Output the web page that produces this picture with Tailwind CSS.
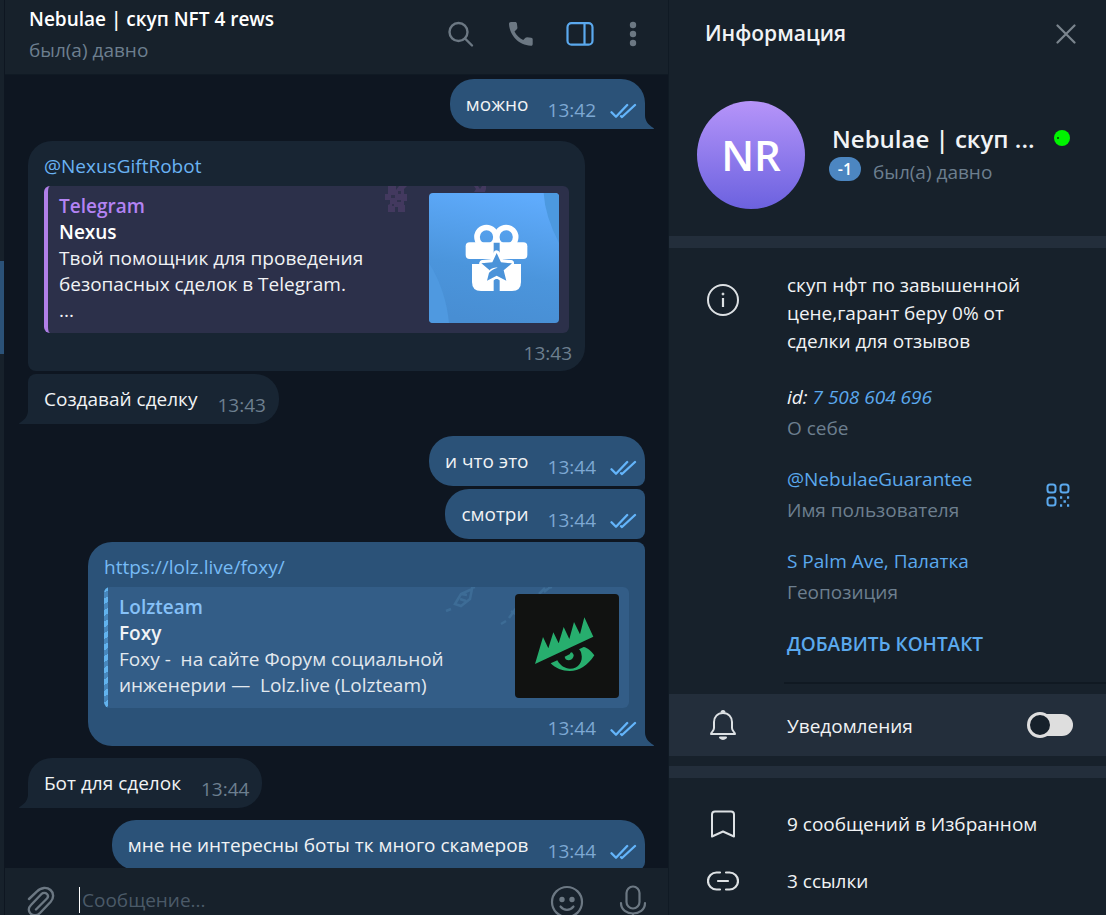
<!DOCTYPE html>
<html lang="ru">
<head>
  <meta charset="UTF-8" />
  <meta name="viewport" content="width=device-width, initial-scale=1.0" />
  <title>Nebulae | скуп NFT 4 rews</title>
  <script src="https://cdn.jsdelivr.net/npm/@tailwindcss/browser@4"></script>
  <style>
    body {
      font-family: 'Open Sans', 'Noto Sans', sans-serif;
    }
  </style>
</head>
<body class="bg-[#0e1621] text-[19px] leading-[26px] text-[#f1f3f5]">

  <!-- Shared icons -->
  <svg class="hidden" aria-hidden="true">
    <symbol id="ticks" viewBox="0 0 27 16">
      <path d="M1.5 9.2 6 13.8 17.2 2M11 13.2l1 .8L25 2" fill="none" stroke="#64b5fb" stroke-width="2.3" stroke-linecap="round" stroke-linejoin="round" />
    </symbol>
    <symbol id="tail" viewBox="0 0 9 14">
      <path d="M0 0C0 6 3 9.500 8.500 13Q9.500 14 8 14H0Z" fill="currentColor" />
    </symbol>
  </svg>

  <div class="flex h-screen overflow-hidden">

    <!-- Edge of the chat list -->
    <div class="w-1 shrink-0 bg-[#17212b] pt-[261px]">
      <div class="h-[93px] bg-[#2b5278]"></div>
    </div>

    <!-- Chat -->
    <main class="flex min-w-0 flex-1 flex-col border-l border-[#0e1621]">
      <header class="flex h-[75px] shrink-0 justify-between border-b border-[#101a24] bg-[#17212b] pr-[23px] pl-6">
        <div class="min-w-0 pt-[6px]">
          <h1 class="truncate font-semibold text-white">Nebulae | скуп NFT 4 rews</h1>
          <p class="mt-[5px] text-[#6d7f8f]">был(а) давно</p>
        </div>
        <div class="flex items-start gap-[30px] pt-[19px] text-[#6c7883]">
          <button type="button" aria-label="Поиск">
            <svg class="size-[30px]" viewBox="0 0 30 30" fill="none" stroke="currentColor" stroke-width="2.4" stroke-linecap="round"><circle cx="13.500" cy="13" r="9" /><path d="m20 19.500 7 7" /></svg>
          </button>
          <button type="button" aria-label="Позвонить">
            <svg class="size-[30px]" viewBox="0 0 30 30" fill="currentColor"><path d="M6 3h4.200c.9 0 1.600.6 1.700 1.500l.5 4.100c.1.6-.1 1.200-.6 1.600L9.500 12.400c1.900 3.700 5 6.800 8.700 8.700l2.300-2.300c.4-.4 1-.6 1.600-.6l4.100.5c.9.1 1.500.8 1.500 1.700v4.500c0 1.200-.9 2-2 1.900C14 26 4.700 16.700 4 5c-.1-1.100.8-2 2-2z" /></svg>
          </button>
          <button type="button" aria-label="Информация о чате" class="text-[#5ba9ee]">
            <svg class="size-[30px]" viewBox="0 0 30 30" fill="none" stroke="currentColor" stroke-width="2.2"><rect x="2.500" y="4.200" width="25" height="21.500" rx="4" /><path d="M19.500 4v22" /></svg>
          </button>
          <button type="button" aria-label="Меню">
            <svg class="h-[30px] w-5" viewBox="0 0 20 30" fill="currentColor"><circle cx="8" cy="6" r="3.200" /><circle cx="8" cy="15" r="3.200" /><circle cx="8" cy="24" r="3.200" /></svg>
          </button>
        </div>
      </header>

      <section class="flex min-h-0 flex-1 flex-col overflow-hidden pt-1 pr-[23px] pl-[23px]" aria-label="Сообщения">
        <div class="relative flex h-[50px] shrink-0 self-end rounded-[24px] rounded-br-none bg-[#2b5278] pt-3 pr-2 pl-4">
          <p>можно</p>
          <time class="mt-[6px] ml-[19px] text-[#7da8d3]">13:42</time>
          <svg class="mt-3 ml-[14px] h-4 w-[27px]"><use href="#ticks" /></svg>
          <svg class="absolute bottom-0 left-full h-[14px] w-[9px] text-[#2b5278]"><use href="#tail" /></svg>
        </div>

        <article class="mt-3 w-[557px] max-w-full shrink-0 rounded-[24px] rounded-bl-lg bg-[#182533] px-4 pt-3 pb-[5px]">
          <a href="#" class="text-[#6ab3f3]">@NexusGiftRobot</a>
          <div class="relative mt-[7px] flex justify-between overflow-hidden rounded-md border-l-4 border-[#b07fe8] bg-[#2c304a] pt-[7px] pr-[10px] pb-[10px] pl-[11px]">
            <svg class="absolute top-0 right-[72px] h-7 w-[120px] text-[#43395f]" viewBox="0 0 120 28" fill="currentColor">
              <path d="M11 0h8v4l3-4h8l-3 3v5h3v7h-3v4h1v7h-7v-5h-3v5h-7v-7l2-1v-4h-5V8h3z" />
              <path d="M97 0h4l2 3 2-3h4v3l-1 3H97l2-3z" />
              <path d="M14 9h4v3h-4zM21 5h3v3h-3zM20 14h4v2h-4zM15 18h2v2h-2z" fill="#30304c" />
            </svg>
            <div class="max-w-[340px]">
              <p class="font-semibold text-[#b383f3]">Telegram</p>
              <p class="font-semibold text-white">Nexus</p>
              <p>Твой помощник для проведения безопасных сделок в Telegram.</p>
              <p>...</p>
            </div>
            <svg class="relative size-[130px] shrink-0 rounded-sm" viewBox="0 0 390 390" role="img" aria-label="Nexus">
              <defs>
                <linearGradient id="sky" x1="0.600" y1="0" x2="0.400" y2="1"><stop offset="0" stop-color="#5fabfc" /><stop offset="0.600" stop-color="#4b95dc" /><stop offset="1" stop-color="#488ed3" /></linearGradient>
              </defs>
              <rect width="390" height="390" fill="url(#sky)" />
              <path d="M344 0q4 70 46 150V0z" fill="#4c99e0" />
              <path d="M0 210q50 80 60 180H0z" fill="#4f99e0" />
              <g fill="none" stroke="#fff" stroke-width="17">
                <circle cx="172.500" cy="132" r="28.500" />
                <circle cx="231.500" cy="132" r="28.500" />
                <path d="M202 128v24" />
              </g>
              <rect x="110" y="148" width="185" height="50" rx="12" fill="#fff" />
              <path d="M129 213h147v54q0 27-27 27h-93q-27 0-27-27z" fill="#fff" />
              <path d="M194 149h18v40h-18zM194 258h18v36h-18z" fill="#4b93d9" />
              <path d="m203 182 12 26 30 3-22 20 7 30-27-16-27 16 7-30-22-20 30-3z" fill="#4b93d9" stroke="#fff" stroke-width="20" stroke-linejoin="round" />
              <path d="m203 180 13 28 33 3-25 21 8 31-29-15-29 15 8-31-25-21 33-3z" fill="#4b93d9" />
              <path d="M174 242c8-14 18-20 32-18-10 2-18 7-24 14z" fill="#fff" />
            </svg>
          </div>
          <div class="mt-[7px] -mr-[3px] flex justify-end text-[#6d7f8f]"><time>13:43</time></div>
        </article>

        <div class="relative mt-[3px] flex h-[50px] shrink-0 self-start rounded-[24px] rounded-tl-lg rounded-bl-none bg-[#182533] pt-3 pr-[13px] pl-4">
          <p>Создавай сделку</p>
          <time class="mt-[6px] ml-5 text-[#6d7f8f]">13:43</time>
          <svg class="absolute right-full bottom-0 h-[14px] w-[9px] -scale-x-100 text-[#182533]"><use href="#tail" /></svg>
        </div>

        <div class="mt-3 flex h-[50px] shrink-0 self-end rounded-[24px] rounded-br-lg bg-[#2b5278] pt-3 pr-2 pl-4">
          <p>и что это</p>
          <time class="mt-[6px] ml-[19px] text-[#7da8d3]">13:44</time>
          <svg class="mt-3 ml-[14px] h-4 w-[27px]"><use href="#ticks" /></svg>
        </div>

        <div class="mt-[3px] flex h-[50px] shrink-0 self-end rounded-[24px] rounded-r-lg bg-[#2b5278] pt-3 pr-2 pl-4">
          <p>смотри</p>
          <time class="mt-[6px] ml-[19px] text-[#7da8d3]">13:44</time>
          <svg class="mt-3 ml-[14px] h-4 w-[27px]"><use href="#ticks" /></svg>
        </div>

        <article class="relative mt-[3px] w-[557px] max-w-full shrink-0 self-end rounded-[24px] rounded-tr-lg rounded-br-none bg-[#2b5278] px-4 pt-3 pb-[5px]">
          <a href="#" class="text-[#77bbf5]">https://lolz.live/foxy/</a>
          <div class="relative mt-[7px] flex justify-between overflow-hidden rounded-md bg-[#335d87] pt-[7px] pr-[10px] pb-[10px] pl-[15px]">
            <div class="absolute inset-y-0 left-0 w-1 bg-[repeating-linear-gradient(150deg,#62b3ee_0px,#62b3ee_5px,#4787bd_5px,#4787bd_10px)]"></div>
            <svg class="absolute top-0 right-[72px] h-10 w-[116px]" viewBox="0 0 116 40" fill="none" stroke="#3d6c96" stroke-width="2.500">
              <path d="M5 24l5-2M14 17l6-10 11-5-2 10-9 7zM19 12l6 2M20 7l6 1M30 1l4-1M60 37l5-3M68 31l8-11M70 24l6 4M98 7l6-6M103 5l6-5M107 1l4-1" />
            </svg>
            <div class="max-w-[340px]">
              <p class="font-semibold text-[#86c1f8]">Lolzteam</p>
              <p class="font-semibold">Foxy</p>
              <p class="text-[#e2e8ee]">Foxy -&nbsp; на сайте Форум социальной инженерии —&nbsp; Lolz.live (Lolzteam)</p>
            </div>
            <svg class="relative size-[104px] shrink-0 rounded-sm" viewBox="0 0 312 312" role="img" aria-label="Foxy">
              <rect width="312" height="312" fill="#111211" />
              <path d="m60 210 24-81 16 34 15-48 16 33 15-49 17 36 14-51 18 37 13-51 27 58z" fill="#27ae6e" />
              <path d="M107 208l20-9c9 16 23 25 38 25 26 0 40-23 34-45-1-6-3-9-7-13l14-7c11 2 23 12 32 25-20 31-46 47-74 47-22 0-43-8-57-23z" fill="#27ae6e" />
              <path d="M149 188l16-8 1-4 5-1q7 7 4 14c-6 14-25 12-26-1z" fill="#27ae6e" />
            </svg>
          </div>
          <div class="mt-[7px] -mr-2 flex justify-end text-[#7da8d3]">
            <time>13:44</time>
            <svg class="mt-[6px] ml-[14px] h-4 w-[27px]"><use href="#ticks" /></svg>
          </div>
          <svg class="absolute bottom-0 left-full h-[14px] w-[9px] text-[#2b5278]"><use href="#tail" /></svg>
        </article>

        <div class="relative mt-3 flex h-[50px] shrink-0 self-start rounded-[24px] rounded-bl-none bg-[#182533] pt-3 pr-[13px] pl-4">
          <p>Бот для сделок</p>
          <time class="mt-[6px] ml-5 text-[#6d7f8f]">13:44</time>
          <svg class="absolute right-full bottom-0 h-[14px] w-[9px] -scale-x-100 text-[#182533]"><use href="#tail" /></svg>
        </div>

        <div class="mt-3 flex h-[50px] shrink-0 self-end rounded-[24px] rounded-br-lg bg-[#2b5278] pt-3 pr-2 pl-4">
          <p>мне не интересны боты тк много скамеров</p>
          <time class="mt-[6px] ml-[19px] text-[#7da8d3]">13:44</time>
          <svg class="mt-3 ml-[14px] h-4 w-[27px]"><use href="#ticks" /></svg>
        </div>
      </section>

      <!-- Composer -->
      <form class="h-[47px] shrink-0 overflow-hidden bg-[#17212b]">
        <div class="flex items-start pt-4 pr-[21px] pl-5 text-[#6c7883]">
          <button type="button" aria-label="Прикрепить файл">
            <svg class="h-9 w-8" viewBox="0 0 32 36" fill="none" stroke="currentColor" stroke-width="2.400" stroke-linecap="round"><path d="M4 15 12 7.500c4-4.500 10-4.500 13.500-1.500s3.500 8 0 12L15 29c-3 3-7 3-9.500.5s-2-6 .5-8.500L16.500 10c1.500-1.500 4-1.500 5.500 0s1 3.500-.5 5L11 25.500" /></svg>
          </button>
          <input type="text" aria-label="Сообщение" placeholder="Сообщение..." class="mt-[3px] ml-[22px] h-[26px] min-w-0 flex-1 border-l border-white pl-[2px] text-[19px] text-white outline-none placeholder:text-[#4b5a68]" />
          <button type="button" aria-label="Эмодзи">
            <svg class="size-9" viewBox="0 0 36 36" fill="none" stroke="currentColor" stroke-width="2.200" stroke-linecap="round"><circle cx="18" cy="18" r="15" /><path d="M11.500 22.500c3.500 4.500 9.500 4.500 13 0" /><circle cx="13" cy="15.500" r="1.600" fill="currentColor" /><circle cx="23" cy="15.500" r="1.600" fill="currentColor" /></svg>
          </button>
          <button type="button" aria-label="Голосовое сообщение" class="ml-8">
            <svg class="h-9 w-[30px]" viewBox="0 0 30 36" fill="none" stroke="currentColor" stroke-width="2.200" stroke-linecap="round"><rect x="9.500" y="2.500" width="13" height="22" rx="6.500" /><path d="M4 19c0 14 24 14 24 0M16 30v5" /></svg>
          </button>
        </div>
      </form>
    </main>

    <!-- Profile -->
    <aside class="flex w-[438px] shrink-0 flex-col overflow-hidden border-l border-[#101a24] bg-[#17212b]">
      <header class="flex shrink-0 items-start justify-between pt-5 pr-[30px] pl-9">
        <h2 class="text-[21px] font-semibold">Информация</h2>
        <button type="button" aria-label="Закрыть" class="mt-1 text-[#7b858e]">
          <svg class="size-5" viewBox="0 0 20 20" fill="none" stroke="currentColor" stroke-width="2.200" stroke-linecap="round"><path d="m1.500 1.500 17 17m0-17-17 17" /></svg>
        </button>
      </header>

      <div class="mt-[55px] flex shrink-0 pr-[34px] pb-[27px] pl-7">
        <div class="flex size-[108px] shrink-0 items-center justify-center rounded-full bg-linear-to-b from-[#b694f9] to-[#6c61df] text-[42px] font-semibold text-white">NR</div>
        <div class="ml-6 min-w-0 flex-1 pt-[22px]">
          <div class="flex items-center justify-between pl-[3px]">
            <p class="text-2xl font-semibold">Nebulae | скуп ...</p>
            <svg class="size-5 shrink-0" viewBox="0 0 20 20"><circle cx="10" cy="9" r="8" fill="#00f400" /><circle cx="6" cy="9" r="1" fill="#063d06" /></svg>
          </div>
          <div class="flex pt-[2px]">
            <span class="flex h-6 w-8 items-center justify-center rounded-full bg-[#4c86c1] text-base font-semibold text-white">-1</span>
            <p class="mt-[2px] ml-3 text-[#6d7f8f]">был(а) давно</p>
          </div>
        </div>
      </div>

      <div class="h-3 shrink-0 bg-[#232e3b]"></div>

      <div class="flex shrink-0 pt-[23px] pr-9 pl-[38px]">
        <svg class="mt-[13px] size-8 shrink-0" viewBox="0 0 32 32" fill="none" stroke="#dde1e4" stroke-width="2"><circle cx="16" cy="16" r="15" /><path d="M16 14v9" stroke-width="2.200" /><circle cx="16" cy="10" r="1" fill="#dde1e4" stroke-width="1" /></svg>
        <div class="ml-12 min-w-0 flex-1">
          <p class="max-w-[250px] leading-7">скуп нфт по завышенной цене,гарант беру 0% от сделки для отзывов</p>
          <p class="mt-7 leading-7 italic">id: <a href="#" class="text-[#5ba9ee]">7 508 604 696</a></p>
          <p class="mt-1 text-[#6d7f8f]">О себе</p>
          <div class="mt-[25px] flex items-center justify-between">
            <div>
              <p><a href="#" class="text-[#5ba9ee]">@NebulaeGuarantee</a></p>
              <p class="mt-[5px] text-[#6d7f8f]">Имя пользователя</p>
            </div>
            <button type="button" aria-label="QR-код" class="text-[#5ba9ee]">
              <svg class="size-6" viewBox="0 0 24 24" fill="none" stroke="currentColor" stroke-width="2"><rect x="1.500" y="1.500" width="8" height="8" rx="2.500" /><rect x="14.500" y="1.500" width="8" height="8" rx="2.500" /><rect x="1.500" y="14.500" width="8" height="8" rx="2.500" /><path d="M14 14.500h2.200M21 14.500h2.200M17.500 18.500h2.400M14 22.500h2.200M21 22.500h2.200" stroke-width="2.400" /></svg>
            </button>
          </div>
          <p class="mt-[25px]"><a href="#" class="text-[#5ba9ee]">S Palm Ave, Палатка</a></p>
          <p class="mt-[5px] text-[#6d7f8f]">Геопозиция</p>
          <button type="button" class="mt-[26px] block font-semibold text-[#5ba9ee]">ДОБАВИТЬ КОНТАКТ</button>
        </div>
      </div>
      <div class="mt-[25px] ml-[115px] h-[2px] shrink-0 bg-[#101922]"></div>

      <label class="mt-[10px] flex h-[62px] shrink-0 items-center bg-[#232e3b] pr-[33px] pl-[38px]">
        <svg class="size-8 shrink-0" viewBox="0 0 32 32" fill="none" stroke="#dde1e4" stroke-width="2" stroke-linejoin="round"><path d="M4 25c0-2 3-2.500 3-6v-6c0-5 3.500-9 9-9s9 4 9 9v6c0 3.500 3 4 3 6z" /><path d="M14.500 3.500a1.500 1.500 0 0 1 3 0M13 28.500h6q-3 3-6 0z" fill="#dde1e4" /></svg>
        <span class="mt-[2px] ml-12 flex-1">Уведомления</span>
        <input type="checkbox" class="relative h-[22px] w-11 appearance-none rounded-full bg-[#dedede] before:absolute before:-top-[2px] before:-left-[2px] before:size-[26px] before:rounded-full before:border-[3px] before:border-[#dedede] before:bg-[#17212b]" />
      </label>
      <div class="mt-[10px] h-3 shrink-0 bg-[#232e3b]"></div>

      <a href="#" class="mt-[30px] flex shrink-0 items-center pl-[38px]">
        <svg class="h-8 w-8 shrink-0" viewBox="0 0 32 32" fill="none" stroke="#dde1e4" stroke-width="2" stroke-linejoin="round"><path d="M5 28.500V6.500q0-3 3-3h16q3 0 3 3v22l-11-5z" /></svg>
        <span class="ml-12">9 сообщений в Избранном</span>
      </a>
      <a href="#" class="mt-[25px] flex shrink-0 items-center pl-[38px]">
        <svg class="h-8 w-8 shrink-0" viewBox="0 0 32 32" fill="none" stroke="#dde1e4" stroke-width="2.200" stroke-linecap="round"><path d="M13 7.500H9.500a8.500 8.500 0 0 0 0 17H13M19 7.500h3.500a8.500 8.500 0 0 1 0 17H19M11 16h10" /></svg>
        <span class="ml-12">3 ссылки</span>
      </a>
    </aside>
  </div>
</body>
</html>
